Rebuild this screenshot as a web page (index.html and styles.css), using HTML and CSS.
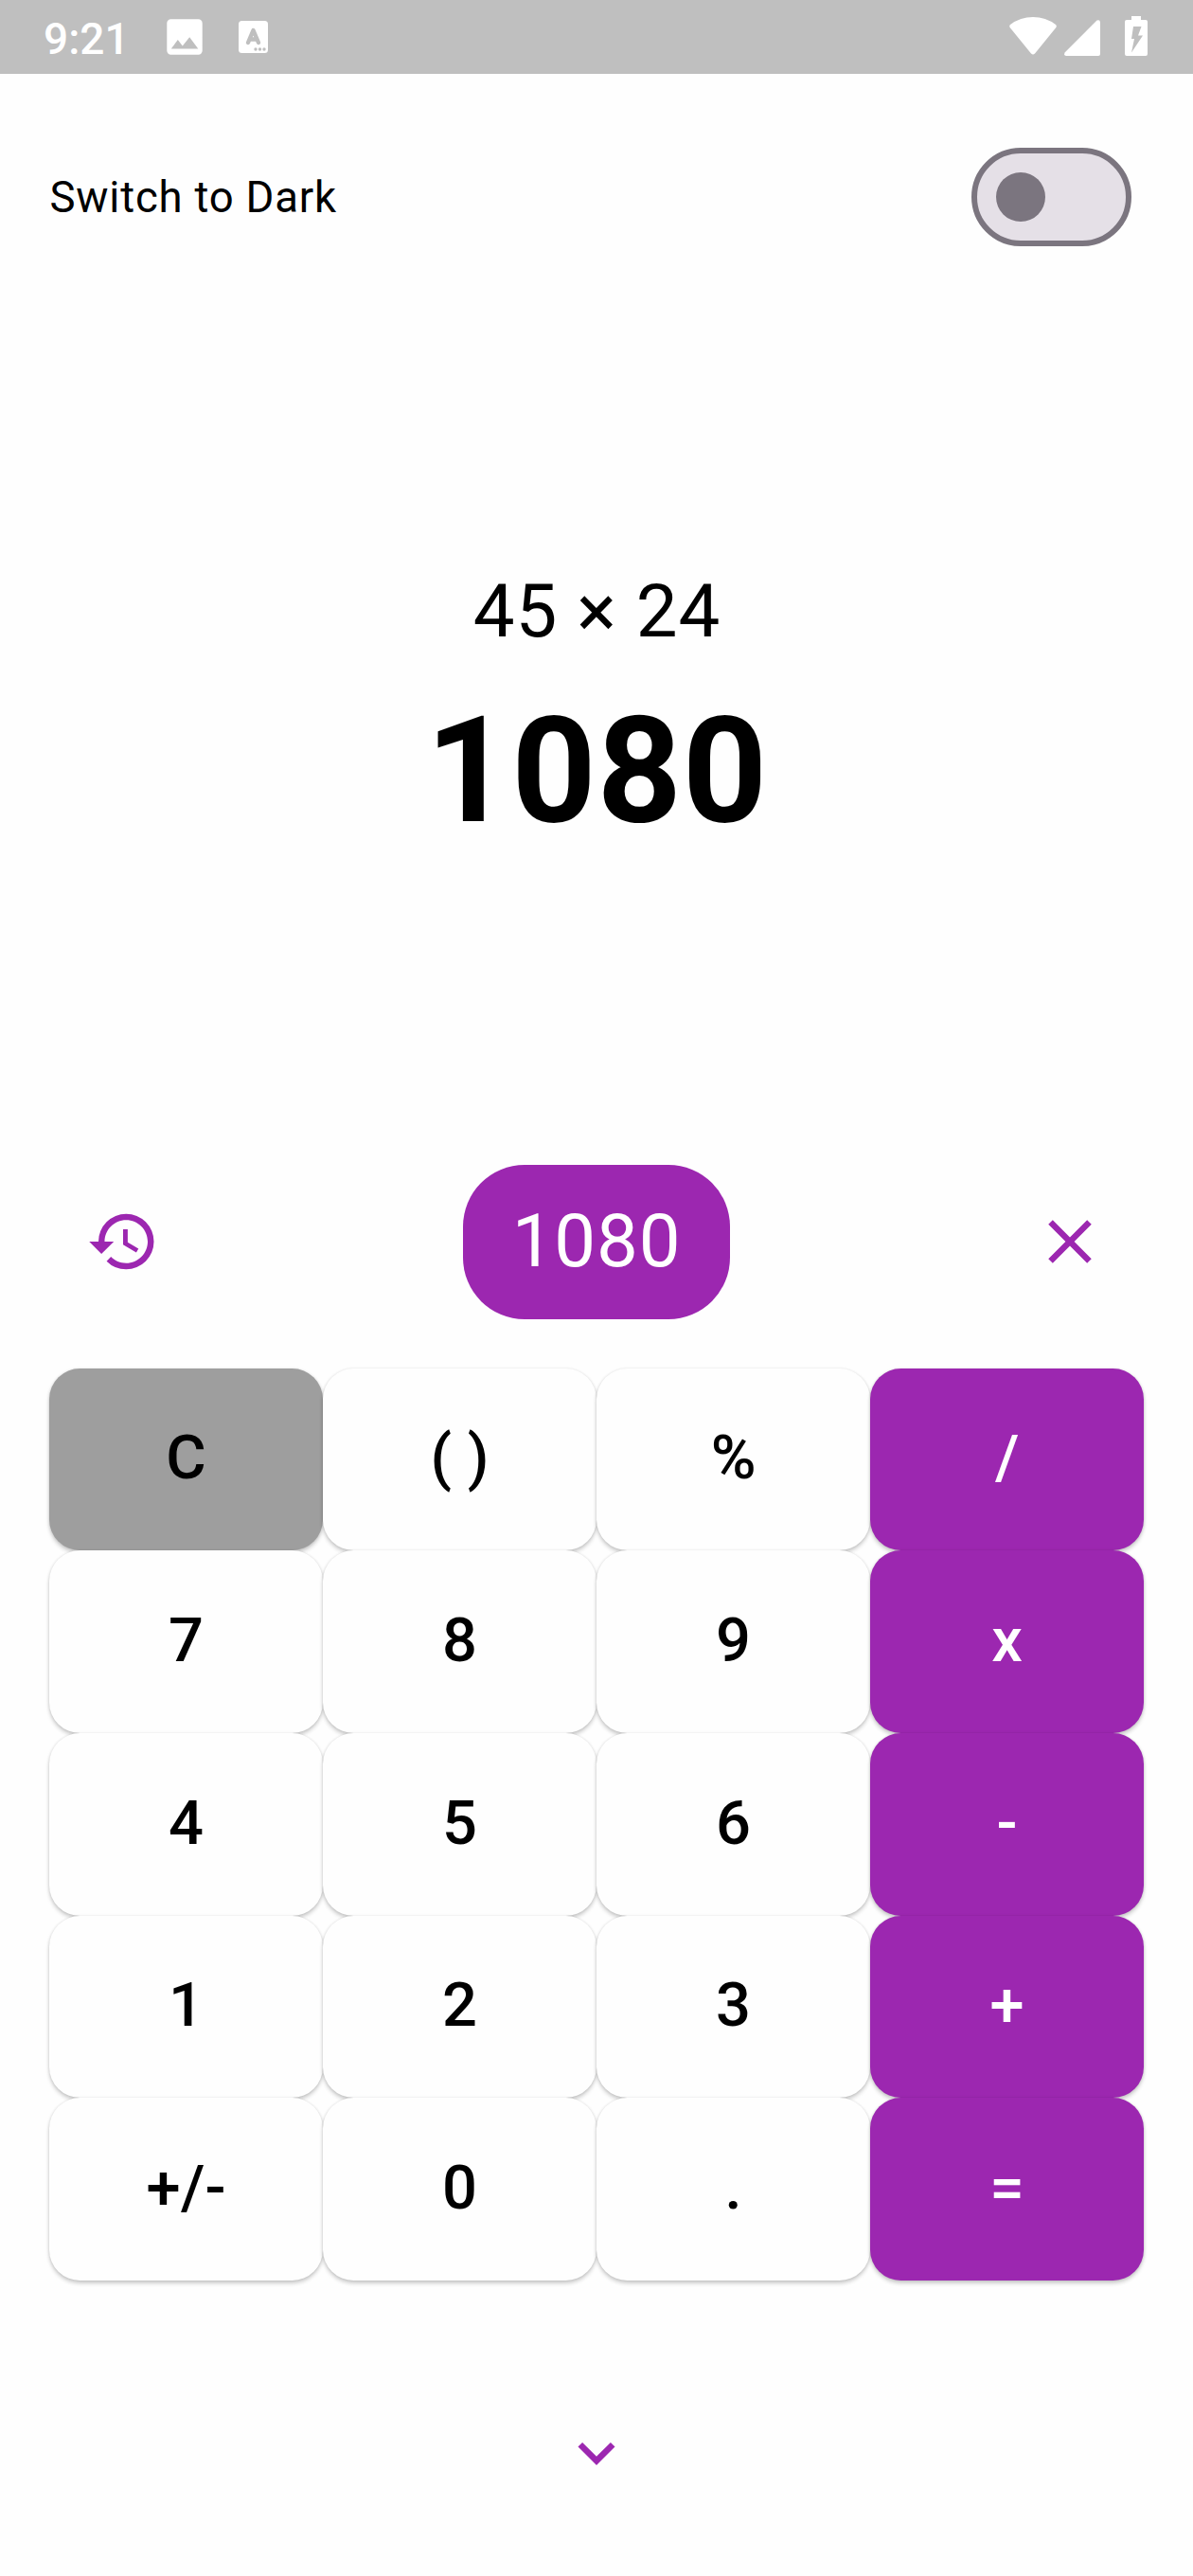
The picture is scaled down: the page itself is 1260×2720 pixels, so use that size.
FILE: index.html
```html
<!DOCTYPE html>
<html lang="en">
<head>
<meta charset="utf-8">
<title>Calculator</title>
<link rel="stylesheet" href="styles.css">
</head>
<body>
<div class="status">
  <span class="clock">9:21</span>
  <svg class="photo" width="38" height="38" viewBox="0 0 38 38"><path fill="#fff" fill-rule="evenodd" d="M4.5 .3h29a4.2 4.2 0 0 1 4.2 4.2v29a4.2 4.2 0 0 1-4.2 4.2h-29A4.2 4.2 0 0 1 .3 33.5v-29A4.2 4.2 0 0 1 4.500 .3zM4.800 31.400h28.500L24.200 19.200 16.800 28.500 11.800 22z"/></svg>
  <svg class="doc" width="31" height="34" viewBox="0 0 31 34"><rect width="31" height="34" rx="3.500" fill="#fff"/><path d="M10 23 15.500 10 21 23M11.500 19.500h8" fill="none" stroke="#bfbfbf" stroke-width="4.400" stroke-linecap="round" stroke-linejoin="round"/><g fill="#bfbfbf"><circle cx="18" cy="30" r="1.700"/><circle cx="22.500" cy="30" r="1.700"/><circle cx="27" cy="30" r="1.700"/></g></svg>
  <svg class="wifi" width="50" height="40" viewBox="0 0 50 40"><path fill="#fff" d="M1 8Q11.500 0 25 0T49 8Q50.500 9.500 49 11.500L27 38.500Q25 40.500 23 38.500L1 11.500Q-.5 9.500 1 8z"/></svg>
  <svg class="signal" width="38" height="38" viewBox="0 0 38 38"><path fill="#fff" d="M.6 34.500 34.500 .6Q37.800-.6 38 2.500V36Q38 38 36 38H2Q-.8 37.500 .6 34.500z"/></svg>
  <svg class="battery" width="24" height="42" viewBox="0 0 24 42"><path fill="#fff" d="M7 0h10v4h5a2 2 0 0 1 2 2v34a2 2 0 0 1-2 2H2a2 2 0 0 1-2-2V6a2 2 0 0 1 2-2h5z"/><path fill="#bfbfbf" d="M9 11h8.500L14 20.500h5L7 38.500 10 24H7z"/></svg>
</div>
<main class="app">
  <div class="theme">
    <span>Switch to Dark</span>
    <div class="switch"><div class="thumb"></div></div>
  </div>
  <div class="display">
    <div class="expression">45 × 24</div>
    <div class="result">1080</div>
  </div>
  <div class="tools">
    <div class="tool"><svg class="icon" viewBox="0 0 24 24"><path d="M13 3a9 9 0 0 0-9 9H1l3.890 3.890.07.14L9 12H6c0-3.870 3.130-7 7-7s7 3.130 7 7-3.130 7-7 7c-1.930 0-3.680-.79-4.940-2.060l-1.420 1.420A8.954 8.954 0 0 0 13 21a9 9 0 0 0 0-18zm-1 5v5l4.280 2.540.72-1.210-3.500-2.080V8H12z"/></svg></div>
    <div class="chip">1080</div>
    <div class="tool"><svg class="icon" viewBox="0 0 24 24"><path d="M19 6.410 17.590 5 12 10.590 6.410 5 5 6.410 10.590 12 5 17.590 6.410 19 12 13.410 17.590 19 19 17.590 13.410 12z"/></svg></div>
  </div>
  <div class="keys">
    <div class="key clear">C</div><div class="key">( )</div><div class="key">%</div><div class="key op">/</div>
    <div class="key">7</div><div class="key">8</div><div class="key">9</div><div class="key op">x</div>
    <div class="key">4</div><div class="key">5</div><div class="key">6</div><div class="key op">-</div>
    <div class="key">1</div><div class="key">2</div><div class="key">3</div><div class="key op">+</div>
    <div class="key">+/-</div><div class="key">0</div><div class="key">.</div><div class="key op">=</div>
  </div>
  <svg class="icon collapse" viewBox="0 0 24 24"><path d="M7.410 8.590 12 13.170l4.590-4.580L18 10l-6 6-6-6z"/></svg>
</main>
</body>
</html>
```
FILE: styles.css
```css
* { box-sizing: border-box; }
body {
  margin: 0;
  width: 1260px;
  height: 2720px;
  overflow: hidden;
  background: #fefefe;
  color: #000;
  font-family: Roboto, sans-serif;
  letter-spacing: 0.8125px;
}
svg { display: block; flex: none; }
.status {
  display: flex;
  align-items: flex-start;
  height: 78px;
  padding-left: 46px;
  background: #bfbfbf;
  color: #fff;
}
.clock {
  width: 130px;
  padding-top: 14px;
  font-size: 46px;
  line-height: 54px;
  font-weight: 500;
  letter-spacing: 0;
}
.photo { margin-top: 20px; }
.doc { margin: 22px 0 0 38px; }
.wifi { margin: 18px 0 0 783px; }
.signal { margin: 21px 0 0 8px; }
.battery { margin: 17px 0 0 26px; }
.app {
  display: flex;
  flex-direction: column;
  padding: 78px 52px 0;
}
.theme {
  display: flex;
  align-items: center;
  justify-content: space-between;
  height: 104px;
  padding: 0 13px 0 0.5px;
  font-size: 45.5px;
}
.switch {
  display: flex;
  align-items: center;
  width: 169px;
  height: 104px;
  padding-left: 19.5px;
  border: 6.5px solid #7b757f;
  border-radius: 52px;
  background: #e5e0e7;
}
.thumb {
  width: 52px;
  height: 52px;
  border-radius: 50%;
  background: #7b757f;
}
.display {
  height: 970px;
  padding: 330px 0 0 1px;
  text-align: center;
}
.expression { font-size: 78px; line-height: 111.5px; }
.result { font-size: 156px; line-height: 224px; font-weight: 700; }
.tools {
  display: flex;
  align-items: center;
  justify-content: space-between;
  height: 162.5px;
}
.tool {
  display: flex;
  justify-content: center;
  width: 156px;
}
.icon { width: 78px; height: 78px; fill: #9c27b0; }
.chip {
  height: 162.5px;
  padding: 0 52px;
  border-radius: 65px;
  background: #9c27b0;
  color: #fff;
  font-size: 78px;
  line-height: 161px;
}
.keys {
  display: grid;
  grid-template-columns: repeat(4, 289px);
  grid-auto-rows: 192.667px;
  margin-top: 52.1px;
}
.key {
  display: flex;
  align-items: center;
  justify-content: center;
  padding: 0 0 3.2px 0.5px;
  border-radius: 32.5px;
  background: #fefefe;
  box-shadow: 0 3px 4px rgba(0, 0, 0, 0.2), 0 0 3px rgba(0, 0, 0, 0.1);
  font-size: 65px;
  font-weight: 500;
  letter-spacing: 0.325px;
}
.clear { background: #9e9e9e; }
.op { background: #9c27b0; color: #fff; }
.collapse { margin: 143px auto 0; }
```
